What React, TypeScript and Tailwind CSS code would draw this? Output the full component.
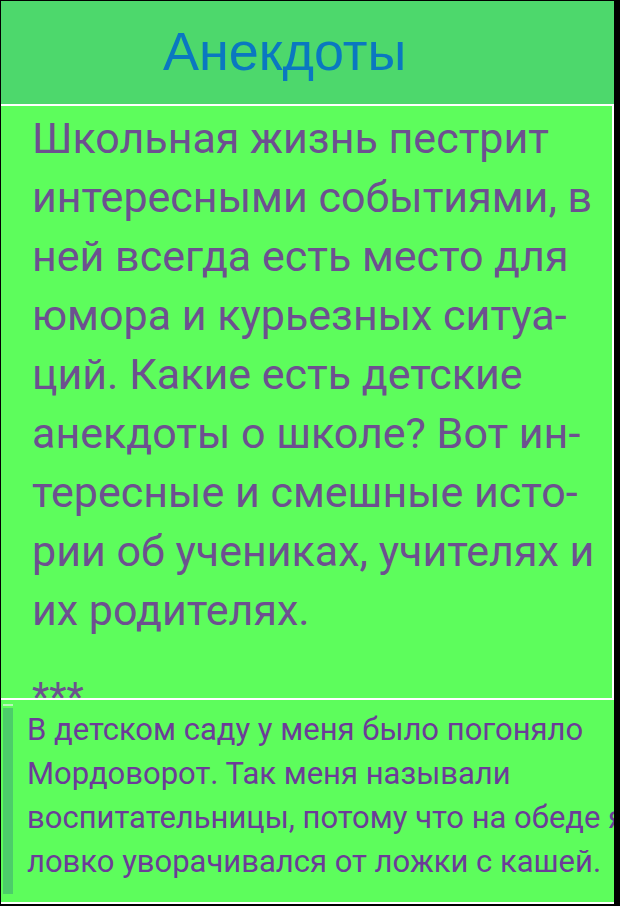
import React from 'react'

const introLines = [
  'Школьная жизнь пестрит',
  'интересными событиями, в',
  'ней всегда есть место для',
  'юмора и курьезных ситуа-',
  'ций. Какие есть детские',
  'анекдоты о школе? Вот ин-',
  'тересные и смешные исто-',
  'рии об учениках, учителях и',
  'их родителях.',
]

const jokeLines = [
  'В детском саду у меня было погоняло',
  'Мордоворот. Так меня называли',
  'воспитательницы, потому что на обеде я',
  'ловко уворачивался от ложки с кашей.',
]

export default function App() {
  return (
    <div className="bg-black min-h-[906px] w-[620px] pt-px pl-px pr-[6px] pb-[2px] overflow-hidden">
      {/* Header */}
      <header className="h-[103px] bg-[#4dd86c] flex items-center pl-[162px]">
        <h1 className="text-[54px] leading-none text-[#0a78c0] font-['Liberation_Sans',Arial,sans-serif] -mt-[3px]">
          Анекдоты
        </h1>
      </header>

      {/* Intro card */}
      <section className="h-[596px] bg-[#5dfd5c] border-2 border-l-0 border-white overflow-hidden pl-[31px] pt-[3px] font-['Roboto',sans-serif] text-[#6d5090]">
        <p className="text-[43px] leading-[59px]">
          {introLines.map((l) => (
            <span key={l} className="block whitespace-nowrap">
              {l}
            </span>
          ))}
        </p>
        <p className="text-[40px] leading-[59px] mt-[28px]">***</p>
      </section>

      {/* Joke card */}
      <section className="h-[204px] bg-[#5dfd5c] border-b-2 border-white overflow-hidden flex">
        <div className="ml-[2px] mt-[4px] w-[10px] shrink-0 flex flex-col">
          <div className="h-[2px] bg-[#b9f5b9]" />
          <div className="flex-1 mt-[2px] mb-[8px] bg-[#4ccd6a]" />
        </div>
        <div className="min-w-0 pl-[14px] pt-[8px] font-['Roboto',sans-serif] text-[31px] leading-[44px] text-[#6c3c98]">
          {jokeLines.map((l) => (
            <span key={l} className="block whitespace-nowrap">
              {l}
            </span>
          ))}
        </div>
      </section>
    </div>
  )
}
